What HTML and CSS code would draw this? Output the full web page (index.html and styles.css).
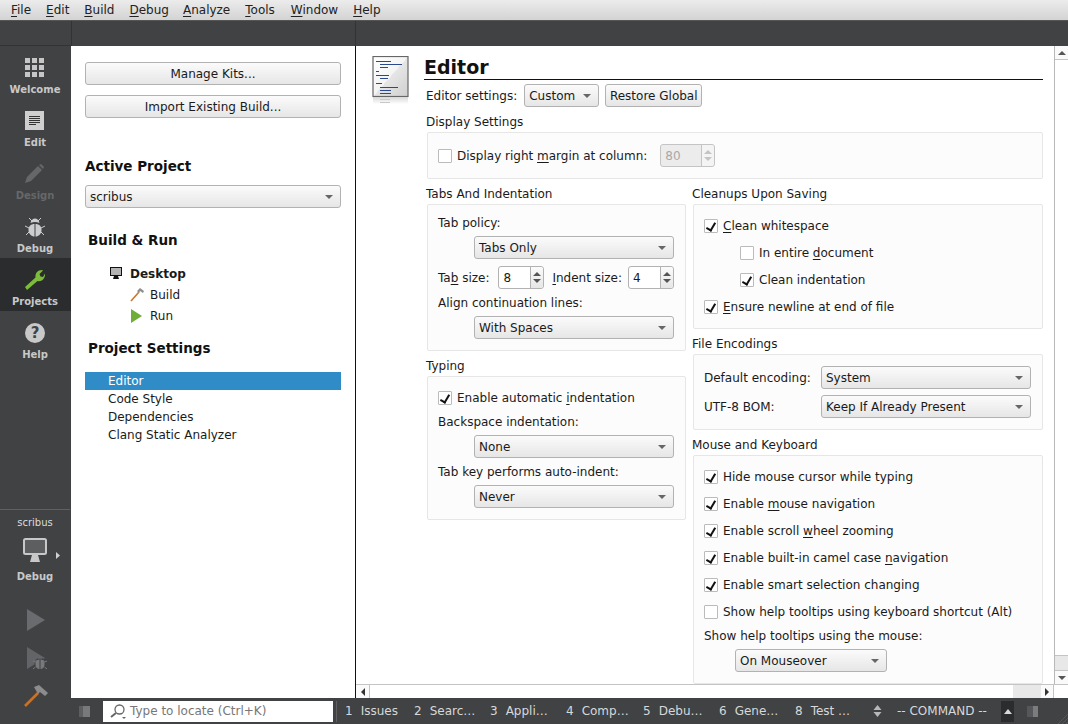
FILE: index.html
```html
<!DOCTYPE html>
<html lang="en">
<head>
<meta charset="utf-8">
<title>Qt Creator - Projects</title>
<link rel="stylesheet" href="styles.css">
</head>
<body>
<div class="app">
  <nav class="menubar">
    <span class="menu"><u>F</u>ile</span><span class="menu"><u>E</u>dit</span><span class="menu"><u>B</u>uild</span><span class="menu"><u>D</u>ebug</span><span class="menu"><u>A</u>nalyze</span><span class="menu"><u>T</u>ools</span><span class="menu"><u>W</u>indow</span><span class="menu"><u>H</u>elp</span>
  </nav>
  <div class="workspace">
    <aside class="modebar">
      <div class="modebar-top"></div>
      <div class="mode">
        <svg class="mode-icon" viewBox="0 0 20 20"><g fill="#c6c6c6"><rect x="0" y="0" width="5" height="5"/><rect x="7" y="0" width="5" height="5"/><rect x="14" y="0" width="5" height="5"/><rect x="0" y="7" width="5" height="5"/><rect x="7" y="7" width="5" height="5"/><rect x="14" y="7" width="5" height="5"/><rect x="0" y="14" width="5" height="5"/><rect x="7" y="14" width="5" height="5"/><rect x="14" y="14" width="5" height="5"/></g></svg>
        <span class="mode-label">Welcome</span>
      </div>
      <div class="mode">
        <svg class="mode-icon" viewBox="0 0 20 20"><rect x="0" y="0" width="19" height="19" fill="#cfcfcf"/><path d="M4 5.500h11M4 7.500h11M4 9.500h11M4 11.500h11M4 13.500h7" stroke="#333" stroke-width="1" fill="none"/></svg>
        <span class="mode-label">Edit</span>
      </div>
      <div class="mode mode-dim">
        <svg class="mode-icon" viewBox="0 0 20 20"><path d="M0 19l2-6L13 2l4 4L6 17z" fill="#666769"/><path d="M14 1l2-1 3 3-1 2z" fill="#666769"/></svg>
        <span class="mode-label">Design</span>
      </div>
      <div class="mode">
        <svg class="mode-icon" viewBox="0 0 20 20"><path d="M9.500 7C6 7 3.500 9 3.500 13c0 4 3 6.500 6 6.500z" fill="#cdcdcd"/><path d="M10.500 7c3.500 0 6 2 6 6 0 4-3 6.500-6 6.500z" fill="#cdcdcd"/><path d="M5.500 6C6 3 8 1.500 10 1.500S14 3 14.500 6c-1.500-.7-3-1-4.500-1s-3 .3-4.500 1z" fill="#cdcdcd"/><path d="M4 1l3 3M16 1l-3 3M0 9l4 2M20 9l-4 2M1 18l3-3M19 18l-3-3" stroke="#cdcdcd" stroke-width="1" fill="none"/></svg>
        <span class="mode-label">Debug</span>
      </div>
      <div class="mode mode-active">
        <svg class="mode-icon" viewBox="0 0 20 20"><path d="M2 20L0 17 10.500 7.500C10 3.500 12.500 0 17 0l1 .5-3.500 3.500 1 2.500 2.500.5L20 3.500c.5 5-3 8.500-7.500 7.500z" fill="#7dbb3a"/></svg>
        <span class="mode-label">Projects</span>
      </div>
      <div class="mode">
        <span class="help-icon">?</span>
        <span class="mode-label">Help</span>
      </div>
      <div class="modebar-spacer"></div>
      <div class="target">
        <span class="target-project">scribus</span>
        <div class="target-kit">
          <svg class="target-monitor" viewBox="0 0 24 24"><rect x="1" y="1" width="22" height="15" rx="1.500" fill="#5c5e60" stroke="#c8c8c8" stroke-width="2"/><path d="M9 17h6l2 7H7z" fill="#c8c8c8"/></svg>
          <svg class="target-arrow" viewBox="0 0 4 7"><path d="M0 0l4 3.500-4 3.500z" fill="#d0d0d0"/></svg>
        </div>
        <span class="mode-label">Debug</span>
      </div>
      <div class="action">
        <svg width="18" height="22" viewBox="0 0 18 22"><path d="M0 0l18 11L0 22z" fill="#696b6e"/></svg>
      </div>
      <div class="action action-debug">
        <svg width="20" height="23" viewBox="0 0 20 23"><path d="M0 0l18 11L0 22z" fill="#626467"/><ellipse cx="13" cy="17" rx="5.500" ry="6.500" fill="#404244"/><path d="M8.500 14c1-1 3-1.500 4-1.500V22c-2.500 0-4-2-4-4.500zM17.500 14c-1-1-3-1.500-4-1.500V22c2.500 0 4-2 4-4.500zM10.500 11.500c.7-1.500 4.300-1.500 5 0z" fill="#77797b"/><path d="M6 14l2.500 1M20 14l-2.500 1M6 22l2.500-2M20 22l-2.500-2" stroke="#77797b" fill="none"/></svg>
      </div>
      <div class="action action-build">
        <svg width="24" height="22" viewBox="0 0 24 22"><path d="M1 21L14 8" stroke="#d0701a" stroke-width="2.600" fill="none"/><path d="M10 2l5-2 9 8-3 3-5-4-2 2z" fill="#8c8c8c"/></svg>
      </div>
    </aside>

    <div class="center">
      <div class="toolbar">
        <div class="toolbar-left"></div>
        <div class="toolbar-right"></div>
      </div>
      <div class="panes">
        <section class="project-pane">
          <button class="btn btn-wide">Manage Kits...</button>
          <button class="btn btn-wide btn-second">Import Existing Build...</button>
          <h2 class="pane-title">Active Project</h2>
          <div class="combo combo-project"><span>scribus</span><i class="caret"></i></div>
          <h2 class="pane-title pane-title-in pane-build">Build &amp; Run</h2>
          <ul class="kit-tree">
            <li class="kit-row kit-desktop">
              <svg width="13" height="13" viewBox="0 0 13 13"><rect x="0.500" y="0.500" width="11" height="8" fill="#b4b4b4" stroke="#111"/><path d="M4 9h4l1 3H3z" fill="#111"/></svg>
              <b>Desktop</b>
            </li>
            <li class="kit-row kit-sub">
              <svg class="kit-sub-icon" width="14" height="14" viewBox="0 0 14 14"><path d="M1 13L9 4" stroke="#c9772c" stroke-width="1.600" fill="none"/><path d="M7 3l3-3 4 3-1 2-3-2-1 2z" fill="#8e8e8e"/></svg>
              Build
            </li>
            <li class="kit-row kit-sub">
              <svg class="kit-sub-icon" width="14" height="14" viewBox="0 0 14 14"><path d="M1 0l11 7-11 7z" fill="#6fac38"/></svg>
              Run
            </li>
          </ul>
          <h2 class="pane-title pane-title-in pane-settings">Project Settings</h2>
          <ul class="settings-list">
            <li class="settings-item settings-current">Editor</li>
            <li class="settings-item">Code Style</li>
            <li class="settings-item">Dependencies</li>
            <li class="settings-item">Clang Static Analyzer</li>
          </ul>
        </section>

        <section class="editor-pane">
          <div class="editor-row">
            <div class="editor-scroll">
              <div class="page">
                <svg class="page-icon" width="38" height="48" viewBox="0 0 38 48">
                  <defs>
                    <linearGradient id="docfill" x1="0" y1="0" x2="1" y2="1"><stop offset="0" stop-color="#fff"/><stop offset="0.5" stop-color="#f4f4f4"/><stop offset="0.5" stop-color="#e6e6e6"/><stop offset="1" stop-color="#cfcfcf"/></linearGradient>
                    <linearGradient id="docfade" x1="0" y1="0" x2="0" y2="1"><stop offset="0" stop-color="#d8d8d8"/><stop offset="1" stop-color="#fff"/></linearGradient>
                  </defs>
                  <rect x="1" y="0.500" width="35" height="40" fill="url(#docfill)" stroke="#666" stroke-width="1.200"/>
                  <rect x="1" y="41" width="35" height="7" fill="url(#docfade)"/>
                  <path d="M4 5.500h15M8 8.500h22M8 11.500h8M4 15.500h3M4 19.500h13M8 22.500h8M4 27.500h6M8 31.500h18M8 34.500h11M8 37.500h11" stroke="#2b4a8c" fill="none"/>
                  <path d="M8 43.500h10M8 46.500h10" stroke="#c8c8c8" fill="none"/>
                </svg>
                <div class="page-body">
                  <h1 class="page-title">Editor</h1>
                  <div class="settings-head">
                    <span>Editor settings:</span>
                    <div class="combo combo-custom"><span>Custom</span><i class="caret"></i></div>
                    <button class="btn btn-restore">Restore Global</button>
                  </div>

                  <div class="sec-title sec-display">Display Settings</div>
                  <div class="group group-display">
                    <span class="check"></span>
                    <span>Display right <u>m</u>argin at column:</span>
                    <div class="spin spin-disabled spin-margin"><span class="spin-value">80</span><span class="spin-arrows"><i class="up"></i><i class="down"></i></span></div>
                  </div>

                  <div class="columns">
                    <div class="col col-left">
                      <div class="sec-title">Tabs And Indentation</div>
                      <div class="group group-tabs">
                        <div class="line">Tab policy:</div>
                        <div class="combo combo-indented combo-after"><span>Tabs Only</span><i class="caret"></i></div>
                        <div class="spin-row">
                          <span>Ta<u>b</u> size:</span>
                          <div class="spin spin-small"><span class="spin-value">8</span><span class="spin-arrows"><i class="up"></i><i class="down"></i></span></div>
                          <span class="indent-label"><u>I</u>ndent size:</span>
                          <div class="spin spin-small"><span class="spin-value">4</span><span class="spin-arrows"><i class="up"></i><i class="down"></i></span></div>
                        </div>
                        <div class="line line-align">Align continuation lines:</div>
                        <div class="combo combo-indented combo-after"><span>With Spaces</span><i class="caret"></i></div>
                      </div>

                      <div class="sec-title sec-typing">Typing</div>
                      <div class="group group-typing">
                        <label class="check-row"><span class="check checked"></span><span>Enable automatic <u>i</u>ndentation</span></label>
                        <div class="line line-back">Backspace indentation:</div>
                        <div class="combo combo-indented combo-after"><span>None</span><i class="caret"></i></div>
                        <div class="line line-tabkey">Tab key performs auto-indent:</div>
                        <div class="combo combo-indented combo-after"><span>Never</span><i class="caret"></i></div>
                      </div>
                    </div>

                    <div class="col col-right">
                      <div class="sec-title">Cleanups Upon Saving</div>
                      <div class="group group-list group-cleanups">
                        <label class="check-row"><span class="check checked"></span><span><u>C</u>lean whitespace</span></label>
                        <label class="check-row check-nested"><span class="check"></span><span>In entire <u>d</u>ocument</span></label>
                        <label class="check-row check-nested"><span class="check checked"></span><span>Clean indentation</span></label>
                        <label class="check-row"><span class="check checked"></span><span><u>E</u>nsure newline at end of file</span></label>
                      </div>

                      <div class="sec-title sec-encodings">File Encodings</div>
                      <div class="group group-encodings">
                        <span>Default encoding:</span>
                        <div class="combo"><span>System</span><i class="caret"></i></div>
                        <span>UTF-8 BOM:</span>
                        <div class="combo"><span>Keep If Already Present</span><i class="caret"></i></div>
                      </div>

                      <div class="sec-title sec-mouse">Mouse and Keyboard</div>
                      <div class="group group-list group-mouse">
                        <label class="check-row"><span class="check checked"></span><span>Hide mouse cursor while typing</span></label>
                        <label class="check-row"><span class="check checked"></span><span>Enable <u>m</u>ouse navigation</span></label>
                        <label class="check-row"><span class="check checked"></span><span>Enable scroll <u>w</u>heel zooming</span></label>
                        <label class="check-row"><span class="check checked"></span><span>Enable built-in camel case <u>n</u>avigation</span></label>
                        <label class="check-row"><span class="check checked"></span><span>Enable smart selection changing</span></label>
                        <label class="check-row"><span class="check"></span><span>Show help tooltips using keyboard shortcut (Alt)</span></label>
                        <div class="line line-mouse">Show help tooltips using the mouse:</div>
                        <div class="combo combo-mouse"><span>On Mouseover</span><i class="caret"></i></div>
                      </div>
                    </div>
                  </div>
                </div>
              </div>
            </div>
            <div class="vscroll">
              <div class="sb-btn sb-btn-v"><i class="up"></i></div>
              <div class="sb-thumb"></div>
              <div class="sb-track"></div>
              <div class="sb-btn sb-btn-v sb-btn-down"><i class="down"></i></div>
            </div>
          </div>
          <div class="hscroll">
            <div class="sb-btn sb-btn-h"><i class="left"></i></div>
            <div class="sb-thumb"></div>
            <div class="sb-track sb-track-h"></div>
            <div class="sb-btn sb-btn-h sb-btn-right"><i class="right"></i></div>
            <div class="sb-corner"></div>
          </div>
        </section>
      </div>

      <footer class="statusbar">
        <svg class="sb-toggle" width="11" height="11" viewBox="0 0 11 11"><rect width="11" height="11" fill="#6a6c6e"/><rect x="4" y="0" width="7" height="11" fill="#77797b"/><rect x="0" y="0" width="4" height="11" fill="#5c5e60"/></svg>
        <div class="locator">
          <svg class="locator-icon" width="16" height="15" viewBox="0 0 16 15"><circle cx="9.500" cy="5.500" r="4.500" fill="none" stroke="#666" stroke-width="1.300"/><path d="M6 9L1 13" stroke="#666" stroke-width="2" fill="none"/><path d="M12 13h4l-2 2z" fill="#666"/></svg>
          <span>Type to locate (Ctrl+K)</span>
        </div>
        <span class="status-sep"></span>
        <span class="pane-tab pane-tab-1"><b>1</b>Issues</span>
        <span class="pane-tab pane-tab-2"><b>2</b>Searc…</span>
        <span class="pane-tab pane-tab-3"><b>3</b>Appli…</span>
        <span class="pane-tab pane-tab-4"><b>4</b>Comp…</span>
        <span class="pane-tab pane-tab-5"><b>5</b>Debu…</span>
        <span class="pane-tab pane-tab-6"><b>6</b>Gene…</span>
        <span class="pane-tab pane-tab-7"><b>8</b>Test …</span>
        <svg class="status-updown" width="9" height="12" viewBox="0 0 9 12"><path d="M4.500 0l4 5H.5zM4.500 12l4-5H.5z" fill="#b8b8b8"/></svg>
        <span class="status-mode">-- COMMAND --</span>
        <span class="status-dark"><svg width="8" height="5" viewBox="0 0 8 5"><path d="M4 0l4 5H0z" fill="#d8d8d8"/></svg></span>
        <svg class="status-right" width="11" height="11" viewBox="0 0 11 11"><rect width="11" height="11" fill="#55575a"/><rect x="6" width="5" height="11" fill="#7a7c7e"/></svg>
        <svg class="status-grip" width="12" height="12" viewBox="0 0 12 12"><path d="M12 2L2 12M12 6L6 12M12 10L10 12" stroke="#55575a" fill="none"/></svg>
      </footer>
    </div>
  </div>
</div>
</body>
</html>
```
FILE: styles.css
```css
* { box-sizing: border-box; }
html, body { margin: 0; padding: 0; height: 100%; }
body { font: 12px/16px "DejaVu Sans", sans-serif; color: #1a1a1a; background: #fff; overflow: hidden; }
ul { list-style: none; margin: 0; padding: 0; }
h1, h2 { margin: 0; }
u { text-underline-offset: 2px; }
i { display: block; }

.app { width: 1068px; height: 724px; display: flex; flex-direction: column; }

.menubar { flex: 0 0 21px; display: flex; align-items: center; padding-left: 4px; background: linear-gradient(#ececec, #d3d3d3); border-bottom: 1px solid #555; }
.menu { padding: 0 7px; margin-right: 1px; color: #222; }
.menu:nth-child(4) { margin-right: 0; }
.menu:nth-child(6) { margin-right: 2px; }

.workspace { flex: 1; display: flex; min-height: 0; }

.modebar { flex: 0 0 71px; display: flex; flex-direction: column; background: #404244; color: #d0d0d0; }
.modebar-top { flex: 0 0 25px; border-bottom: 1px solid #333; }
.mode { flex: 0 0 53px; display: flex; flex-direction: column; align-items: center; padding: 12px 1px 0 0; }
.mode-icon { width: 20px; height: 20px; display: block; }
.mode-label { font-size: 10px; line-height: 13px; font-weight: bold; color: #c8c8c8; margin-top: 5px; }
.mode-dim .mode-label { color: #666769; }
.mode-active { background: #2b2c2e; }
.help-icon { width: 20px; height: 20px; border-radius: 50%; background: #c8c8c8; color: #404244; font-weight: bold; font-size: 15px; line-height: 20px; text-align: center; }
.modebar-spacer { flex: 1; }

.target { display: flex; flex-direction: column; align-items: center; border-top: 1px solid #5e6062; padding-top: 5px; height: 100px; margin-right: 1px; }
.target-project { line-height: 16px; font-size: 10px; color: #dcdcdc; }
.target-kit { position: relative; width: 24px; height: 24px; margin-top: 7px; }
.target-monitor { display: block; width: 24px; height: 24px; }
.target-arrow { position: absolute; left: 33px; top: 14px; width: 4px; height: 7px; }
.target .mode-label { margin-top: 8px; }
.action { height: 38px; display: flex; justify-content: center; }
.action svg { display: block; }
.action-debug svg { margin-left: 2px; }
.action-build { height: 39px; }

.center { flex: 1; display: flex; flex-direction: column; min-width: 0; }
.toolbar { flex: 0 0 25px; display: flex; background: #404244; }
.toolbar-left { flex: 0 0 285px; border-left: 1px solid #333; border-right: 1px solid #333; }
.toolbar-right { flex: 1; }
.panes { flex: 1; display: flex; min-height: 0; }

.project-pane { flex: 0 0 285px; padding: 16px 14px 0 14px; background: #fff; border-right: 1px solid #111; }
.btn { font: inherit; color: #1a1a1a; background: linear-gradient(#fbfbfb, #e6e6e6); border: 1px solid #b2b2b2; border-radius: 3px; padding: 0; height: 23px; display: block; }
.btn-wide { width: 256px; }
.btn-second { margin-top: 10px; }
.pane-title { font-size: 13.500px; line-height: 18px; font-weight: bold; color: #111; margin-top: 39px; }
.pane-title-in { padding-left: 3px; }
.combo { height: 23px; display: flex; align-items: center; justify-content: space-between; padding: 0 7px 0 4px; background: linear-gradient(#fbfbfb, #e6e6e6); border: 1px solid #b2b2b2; border-radius: 3px; }
.caret { width: 0; height: 0; border-left: 4px solid transparent; border-right: 4px solid transparent; border-top: 4px solid #666; }
.combo-project { margin-top: 10px; width: 256px; }
.pane-build { margin-top: 23px; }
.kit-tree { margin-top: 14px; padding-left: 25px; }
.kit-row { height: 21px; display: flex; align-items: center; }
.kit-desktop b { margin-left: 7px; }
.kit-sub { padding-left: 20px; }
.kit-sub-icon { margin-right: 6px; }
.pane-settings { margin-top: 13px; }
.settings-list { margin-top: 15px; width: 256px; }
.settings-item { height: 18px; line-height: 18px; padding-left: 23px; }
.settings-current { background: #308cc6; color: #fff; }

.editor-pane { flex: 1; display: flex; flex-direction: column; min-width: 0; }
.editor-row { flex: 1; display: flex; min-height: 0; }
.editor-scroll { flex: 1; min-width: 0; overflow: hidden; }
.page { display: flex; padding: 10px 0 0 16px; }
.page-icon { flex: 0 0 38px; display: block; }
.page-body { width: 619px; margin-left: 14px; }
.page-title { font-size: 19px; line-height: 23px; font-weight: bold; color: #111; border-bottom: 1px solid #111; height: 24px; }
.settings-head { display: flex; align-items: center; padding-left: 2px; height: 23px; margin-top: 4px; }
.combo-custom { width: 75px; margin-left: 7px; }
.btn-restore { width: 97px; margin-left: 6px; }
.sec-title { padding-left: 2px; height: 16px; line-height: 16px; margin-bottom: 2px; }
.sec-display { margin-top: 7px; }
.group { background: #fcfcfc; border: 1px solid #e6e6e6; border-radius: 2px; }
.group-display { margin-left: 3px; height: 47px; display: flex; align-items: center; padding-left: 10px; }
.check { flex: 0 0 14px; width: 14px; height: 14px; background: #fff; border: 1px solid #bbb; border-radius: 1px; margin-right: 5px; position: relative; display: block; }
.check.checked::after { content: ""; position: absolute; left: 3px; top: 1px; width: 4px; height: 8px; border: solid #111; border-width: 0 2px 2px 0; transform: rotate(30deg); }
.spin { display: flex; height: 23px; background: #fff; border: 1px solid #b2b2b2; border-radius: 3px; align-items: stretch; }
.spin-value { flex: 1; padding-left: 4px; line-height: 22px; }
.spin-arrows { flex: 0 0 13px; border-left: 1px solid #b2b2b2; display: flex; flex-direction: column; align-items: center; justify-content: center; gap: 3px; background: linear-gradient(#fbfbfb, #e6e6e6); border-radius: 0 3px 3px 0; }
.up, .down, .left, .right { width: 0; height: 0; }
.up { border-left: 4px solid transparent; border-right: 4px solid transparent; border-bottom: 4px solid #555; }
.down { border-left: 4px solid transparent; border-right: 4px solid transparent; border-top: 4px solid #555; }
.left { border-top: 4px solid transparent; border-bottom: 4px solid transparent; border-right: 4px solid #333; }
.right { border-top: 4px solid transparent; border-bottom: 4px solid transparent; border-left: 4px solid #333; }
.spin-margin { width: 55px; margin-left: 13px; }
.spin-disabled { background: #ececec; color: #a8a8a8; border-color: #c4c4c4; }
.spin-disabled .up { border-bottom-color: #c4c4c4; }
.spin-disabled .down { border-top-color: #c4c4c4; }
.spin-disabled .spin-arrows { background: #f4f4f4; border-color: #c4c4c4; }

.columns { display: flex; margin-top: 7px; }
.col-left { width: 266px; flex: none; }
.col-right { width: 353px; flex: none; }
.col-left .group { margin-left: 3px; width: 259px; }
.col-right .group { margin-left: 3px; width: 350px; }

.group-tabs { height: 147px; padding: 10px 11px 0 10px; }
.line { line-height: 16px; height: 16px; }
.combo-indented { width: 200px; margin-left: 36px; }
.combo-after { margin-top: 5px; }
.spin-row { display: flex; align-items: center; margin-top: 7px; }
.spin-small { width: 46px; }
.spin-row .spin:nth-child(2) { margin-left: 9px; }
.indent-label { margin-left: 8px; }
.spin-row .spin:nth-child(4) { margin-left: 6px; }
.line-align { margin-top: 6px; }
.sec-typing { margin-top: 7px; }
.group-typing { height: 144px; padding: 13px 11px 0 10px; }
.check-row { display: flex; align-items: center; height: 16px; }
.line-back { margin-top: 8px; }
.line-tabkey { margin-top: 6px; }
.group-list { display: flex; flex-direction: column; gap: 11px; }
.group-cleanups { height: 125px; padding: 13px 0 0 10px; }
.check-nested { padding-left: 36px; }
.sec-encodings { margin-top: 7px; }
.group-encodings { height: 76px; display: grid; grid-template-columns: 117px 210px; align-content: start; align-items: center; row-gap: 6px; padding: 11px 0 0 10px; }
.sec-mouse { margin-top: 7px; }
.group-mouse { height: 229px; padding: 13px 0 0 10px; }
.line-mouse { margin-top: -3px; }
.combo-mouse { width: 152px; margin-left: 31px; margin-top: -6px; }

.vscroll { flex: 0 0 14px; display: flex; flex-direction: column; background: #f4f4f4; border-left: 1px solid #b8b8b8; }
.sb-btn { display: flex; align-items: center; justify-content: center; background: #fafafa; }
.sb-btn-v { flex: 0 0 14px; border-bottom: 1px solid #c4c4c4; }
.sb-btn-down { border-bottom: 0; border-top: 1px solid #c4c4c4; }
.vscroll .sb-thumb { flex: 1; background: #fff; }
.vscroll .sb-track { flex: 0 0 15px; background: #e8e8e8; border-top: 1px solid #c4c4c4; }
.hscroll { flex: 0 0 14px; display: flex; border-top: 1px solid #c4c4c4; background: #fff; }
.sb-btn-h { flex: 0 0 14px; border-right: 1px solid #c4c4c4; }
.hscroll .sb-thumb { flex: 1; background: #fff; }
.sb-track-h { flex: 0 0 28px; background: #e8e8e8; }
.sb-btn-right { flex: 0 0 13px; border-right: 1px solid #c4c4c4; }
.sb-corner { flex: 0 0 14px; background: #fff; }

.statusbar { flex: 0 0 26px; display: flex; align-items: center; background: #404244; color: #d8d8d8; position: relative; padding-left: 8px; }
.sb-toggle { display: block; }
.locator { width: 230px; height: 21px; margin-left: 13px; background: #fff; color: #777; display: flex; align-items: center; padding-left: 7px; }
.locator-icon { margin-right: 4px; }
.status-sep { width: 1px; height: 21px; background: #5e6062; margin-left: 3px; }
.pane-tab { white-space: nowrap; flex: none; }
.pane-tab b { font-weight: normal; margin-right: 8px; }
.pane-tab-1 { margin-left: 8px; width: 69px; }
.pane-tab-2, .pane-tab-3, .pane-tab-5, .pane-tab-6 { width: 76px; }
.pane-tab-4 { width: 77px; }
.pane-tab-7 { width: 78px; }
.status-updown { display: block; }
.status-mode { margin-left: 15px; width: 104px; flex: none; }
.status-dark { flex: none; width: 13px; height: 21px; background: #2b2c2e; display: flex; align-items: center; justify-content: center; }
.status-right { display: block; margin-left: 13px; }
.status-grip { position: absolute; right: 0; bottom: 0; }
```
